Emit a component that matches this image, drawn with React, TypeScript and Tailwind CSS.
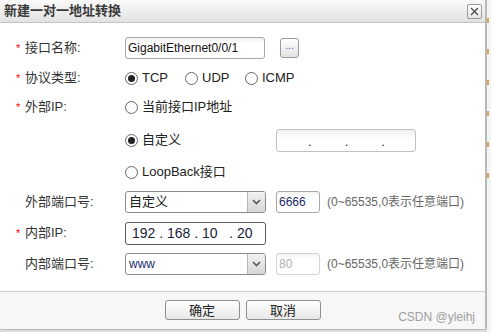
const font = { fontFamily: '"Liberation Sans", "Noto Sans CJK SC", sans-serif' };

function Label({ text, required }: { text: string; required?: boolean }) {
  return (
    <div className="flex w-[125px] shrink-0 items-center">
      <span className="w-[25px] pl-[16px] text-[11px] leading-none text-[#ff0000]">{required ? "*" : ""}</span>
      <span className="text-[13px] text-[#333]">{text}</span>
    </div>
  );
}

function Radio({ checked, label }: { checked?: boolean; label: string }) {
  return (
    <label className="flex items-center text-[13px] text-[#222]">
      <span className="grid h-[13px] w-[13px] place-items-center rounded-full border border-[#666] bg-white">
        {checked && <span className="h-[7px] w-[7px] rounded-full bg-[#222]" />}
      </span>
      <span className="ml-[4px]">{label}</span>
    </label>
  );
}

function Select({ value, blue }: { value: string; blue?: boolean }) {
  return (
    <div className="flex h-[22px] w-[141px] overflow-hidden rounded-[3px] border border-[#8a8a8a] bg-white">
      <div className={`flex flex-1 items-center pl-[3px] ${blue ? "text-[12px] text-[#1b2a6b]" : "text-[13px] text-[#222]"}`}>{value}</div>
      <div className="grid w-[18px] place-items-center border-l border-[#b5b5b5] bg-gradient-to-b from-[#f2f2f2] to-[#d6d6d6]">
        <svg width="9" height="6" viewBox="0 0 9 6">
          <path d="M1 1 L4.5 4.5 L8 1" fill="none" stroke="#555" strokeWidth="1.6" />
        </svg>
      </div>
    </div>
  );
}

function PortBox({ value, disabled }: { value: string; disabled?: boolean }) {
  return (
    <div className={`ml-[10px] flex h-[22px] w-[44px] items-center rounded-[3px] border ${disabled ? "border-[#d4d4d4] text-[#b0b0b0]" : "border-[#a8a8a8] text-[#1b2a6b]"} bg-gradient-to-b from-[#f4f4f4] to-white to-[30%] pl-[2px] text-[12px]`}>
      {value}
    </div>
  );
}

function Hint() {
  return <span className="ml-[7px] text-[12px] text-[#666]">(0~65535,0表示任意端口)</span>;
}

export default function App() {
  return (
    <div className="relative h-[332px] w-[491px] overflow-hidden bg-[#dcdcdc]" style={font}>
      {/* page behind the dialog */}
      <div className="absolute right-0 top-0 flex h-full w-[4px] flex-col gap-[26px] bg-[#f4f4f4] pt-[18px]">
        {[0, 1, 2, 3, 4, 5].map((i) => (
          <span key={i} className="h-[5px] w-[2px] bg-[#d9a35c]" />
        ))}
      </div>

      <div className="flex h-[330px] w-[487px] flex-col overflow-hidden rounded-b-[3px] border-r-2 border-b border-[#b8b8b8] bg-white">
        {/* title bar */}
        <div className="flex h-[23px] shrink-0 items-center justify-between border-b border-[#c4c4c4] bg-gradient-to-b from-[#fafafa] to-[#e2e2e2] pl-[4px] pr-[3px]">
          <span className="text-[13px] font-bold text-[#3a3a3a]">新建一对一地址转换</span>
          <button className="grid h-[15px] w-[15px] place-items-center rounded-[2px] border border-[#9a9a9a] bg-gradient-to-b from-white to-[#e6e6e6]">
            <svg width="9" height="9" viewBox="0 0 9 9">
              <path d="M1 1 L8 8 M8 1 L1 8" stroke="#444" strokeWidth="1.2" />
            </svg>
          </button>
        </div>

        {/* form */}
        <div className="flex flex-1 flex-col">
          <div className="mt-[13px] flex h-[24px] items-center">
            <Label text="接口名称:" required />
            <div className="flex h-[22px] w-[140px] items-center rounded-[3px] border border-[#a8a8a8] bg-gradient-to-b from-[#f2f2f2] to-white to-[30%] pl-[2px] text-[12px] text-[#111]">
              GigabitEthernet0/0/1
            </div>
            <button className="ml-[15px] grid h-[20px] w-[19px] place-items-center rounded-[3px] border border-[#9a9a9a] bg-gradient-to-b from-white to-[#e4e4e4] pb-[4px] text-[10px] leading-none text-[#3355aa]">
              ...
            </button>
          </div>

          <div className="mt-[6px] flex h-[24px] items-center">
            <Label text="协议类型:" required />
            <div className="flex items-center">
              <div className="w-[60px]"><Radio checked label="TCP" /></div>
              <div className="w-[60px]"><Radio label="UDP" /></div>
              <Radio label="ICMP" />
            </div>
          </div>

          <div className="mt-[5px] flex h-[24px] items-center">
            <Label text="外部IP:" required />
            <Radio label="当前接口IP地址" />
          </div>

          <div className="mt-[9px] flex h-[24px] items-center">
            <Label text="" />
            <div className="w-[151px]"><Radio checked label="自定义" /></div>
            <div className="flex h-[23px] w-[140px] items-end rounded-[3px] border border-[#c2c2c2] bg-gradient-to-b from-[#f0f0f0] to-white to-[40%] pb-[3px] text-[13px] leading-none text-[#222]">
              <span className="ml-[31px]">.</span>
              <span className="ml-[33px]">.</span>
              <span className="ml-[33px]">.</span>
            </div>
          </div>

          <div className="mt-[8px] flex h-[24px] items-center">
            <Label text="" />
            <Radio label="LoopBack接口" />
          </div>

          <div className="mt-[6px] flex h-[24px] items-center">
            <Label text="外部端口号:" />
            <Select value="自定义" />
            <PortBox value="6666" />
            <Hint />
          </div>

          <div className="mt-[7px] flex h-[24px] items-center">
            <Label text="内部IP:" required />
            <div className="flex h-[23px] w-[141px] items-center whitespace-pre rounded-[3px] border border-[#5a5a5a] bg-white pl-[6px] text-[14px] text-[#1b1b3a]">
              192 . 168 . 10   . 20
            </div>
          </div>

          <div className="mt-[7px] flex h-[24px] items-center">
            <Label text="内部端口号:" />
            <Select value="www" blue />
            <PortBox value="80" disabled />
            <Hint />
          </div>
        </div>

        {/* footer */}
        <div className="relative flex h-[38px] shrink-0 justify-center gap-[6px] border-t border-[#cfcfcf] bg-[#f7f7f7] pt-[8px]">
          <button className="h-[20px] w-[75px] rounded-[3px] border border-[#8f8f8f] bg-gradient-to-b from-white to-[#e8e8e8] text-[13px] leading-none text-[#222]">
            确定
          </button>
          <button className="h-[20px] w-[75px] rounded-[3px] border border-[#8f8f8f] bg-gradient-to-b from-white to-[#e8e8e8] text-[13px] leading-none text-[#222]">
            取消
          </button>
          <span className="absolute right-[10px] top-[16px] text-[12px] text-[#a0a0a0]">CSDN @yleihj</span>
        </div>
      </div>
    </div>
  );
}
